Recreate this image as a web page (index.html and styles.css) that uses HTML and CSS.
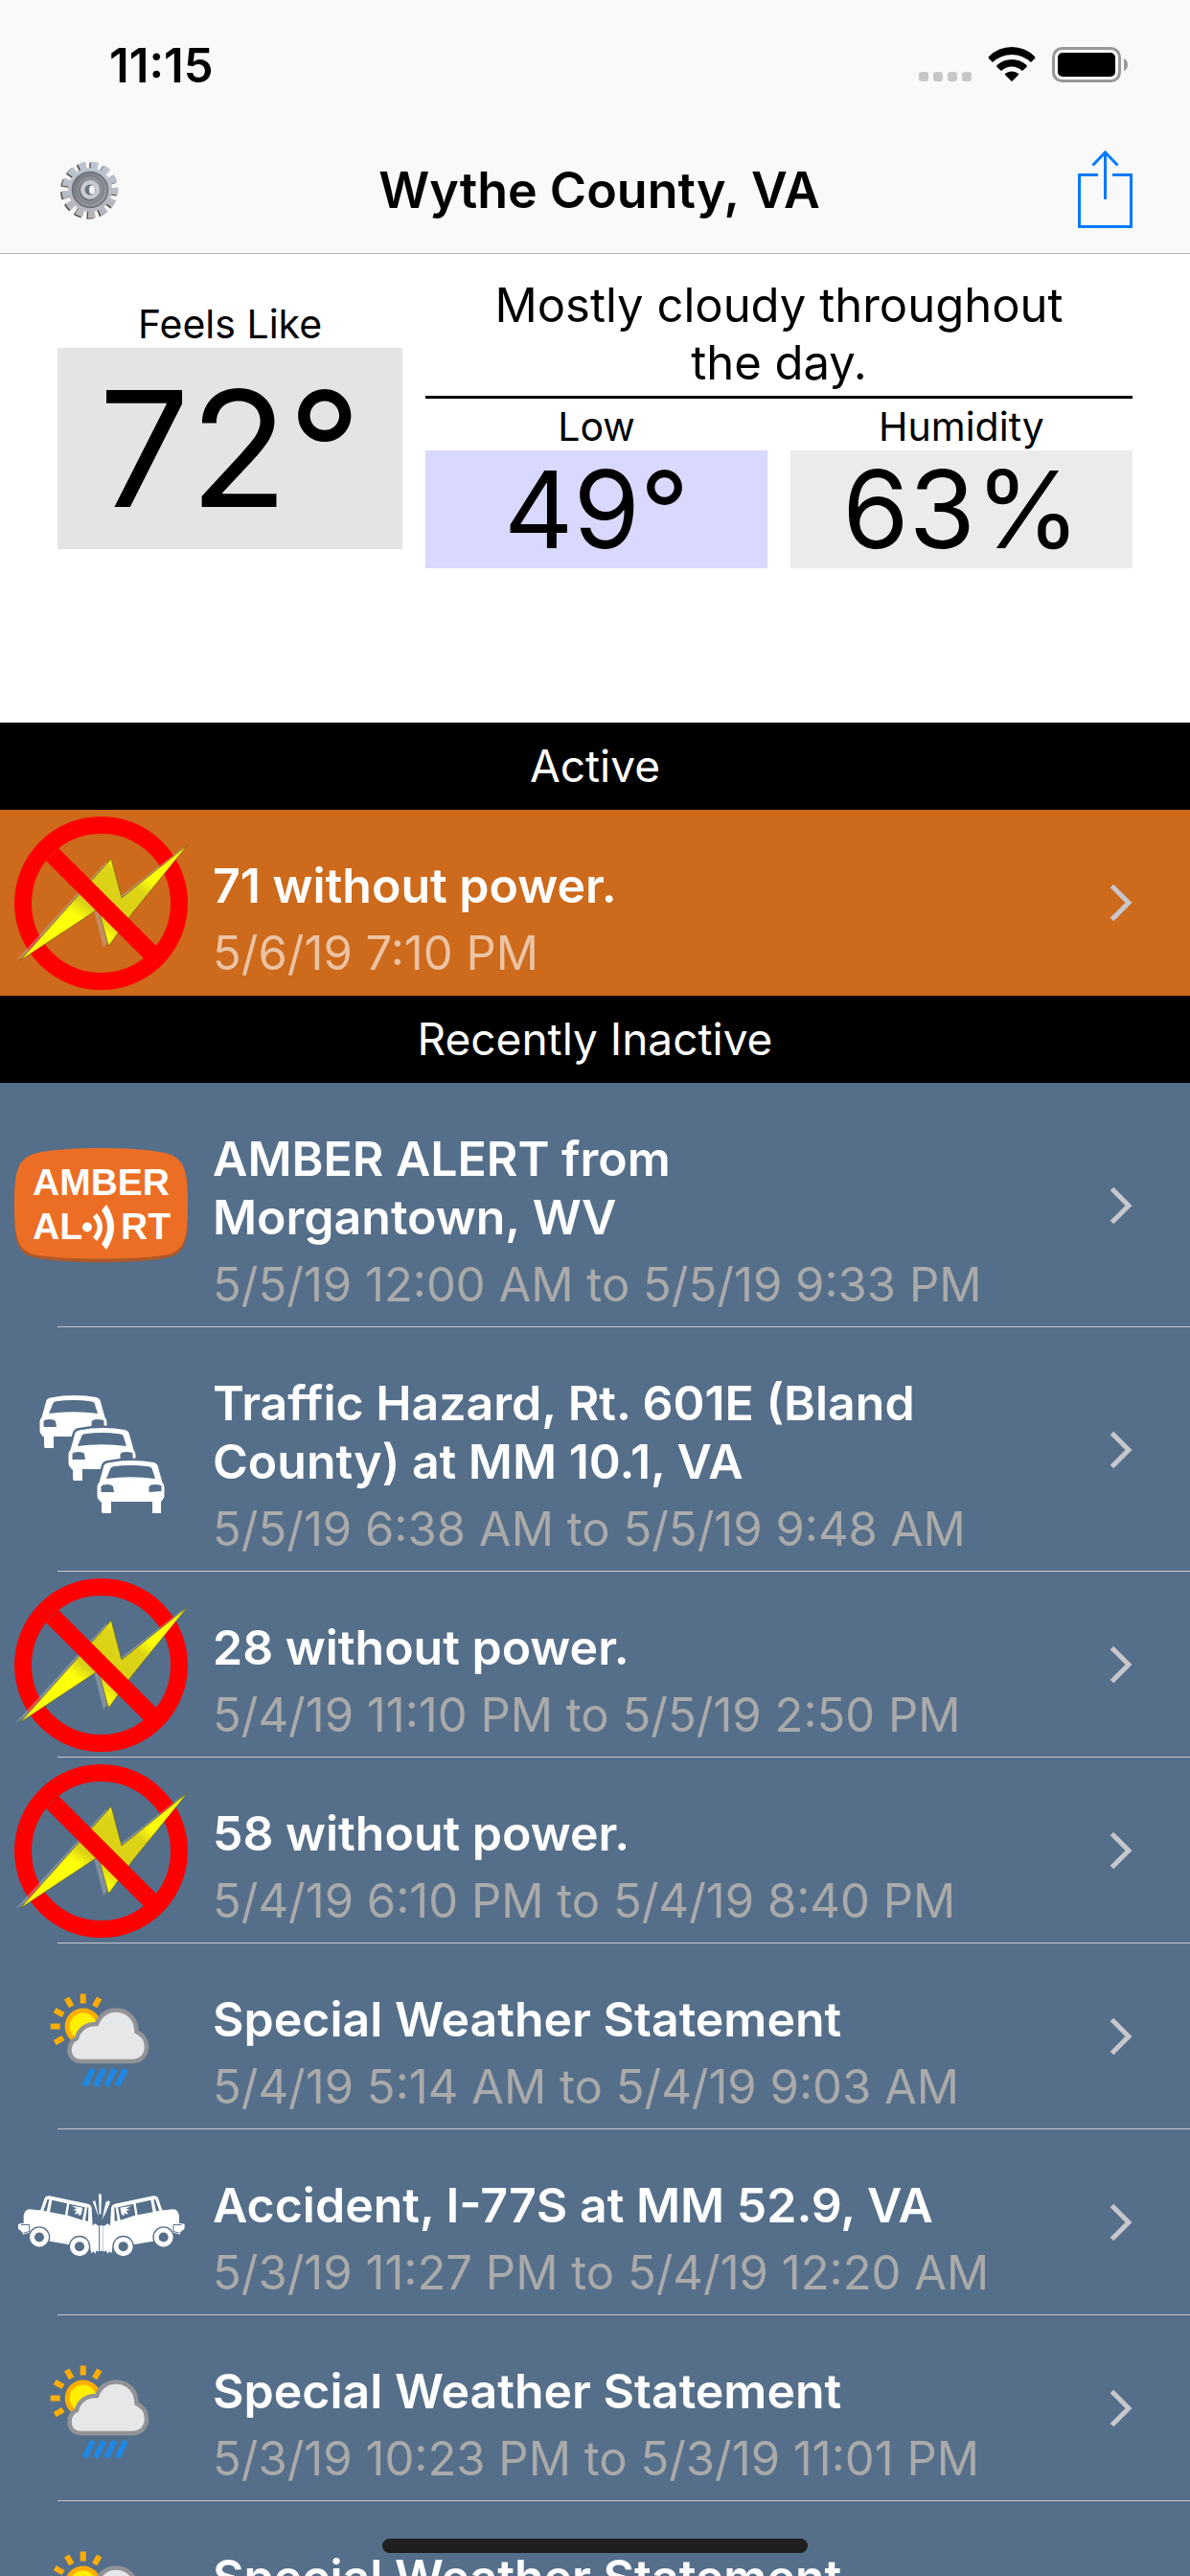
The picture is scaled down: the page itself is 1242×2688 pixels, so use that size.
FILE: index.html
```html
<!DOCTYPE html>
<html lang="en">
<head>
<meta charset="utf-8">
<meta name="viewport" content="width=device-width, initial-scale=1">
<title>Wythe County, VA</title>
<link rel="stylesheet" href="styles.css">
</head>
<body>
<svg class="sprite" aria-hidden="true">
  <defs>
    <linearGradient id="bolt-fill" x1="0" y1="1" x2="1" y2="0">
      <stop offset=".36" stop-color="#ffff0a"/>
      <stop offset=".44" stop-color="#d9d018"/>
      <stop offset=".66" stop-color="#ddd416"/>
      <stop offset=".74" stop-color="#ffff0a"/>
    </linearGradient>
    <linearGradient id="steel" x1="0" y1="0" x2="0" y2="1">
      <stop offset="0" stop-color="#b9c5d0"/>
      <stop offset="1" stop-color="#b9b6bd"/>
    </linearGradient>
    <linearGradient id="steel-dark" x1="0" y1="0" x2="1" y2="1">
      <stop offset="0" stop-color="#70757b"/>
      <stop offset="1" stop-color="#a2a5ab"/>
    </linearGradient>
  </defs>

  <symbol id="no-power" viewBox="0 0 181 181">
    <circle cx="90.5" cy="90.5" r="81.5" fill="none" stroke="#f00" stroke-width="18"/>
    <path d="M176 32 107 86 96 47 1 151 83 98 93 137 118 104Z" fill="#b9b9b9" fill-opacity=".45"/>
    <path d="M180.500 30 112 85 101 44 6.400 150 87.700 96.300 98.400 135 123 101Z" fill="url(#bolt-fill)" stroke="#5e5a10" stroke-width=".6"/>
    <path d="M39.500 39.500 142 142" stroke="#f00" stroke-width="18.500"/>
  </symbol>

  <symbol id="car" viewBox="-4 -4 78 63">
    <path class="car-body" d="M0 27Q0 25 2 23L7 5Q8 3 11 2.500Q35-2 59 2Q62 3 63 5L68 23Q70 25 70 28V37Q70 39 66.500 43V55H57.500V43H14.500V55H6Q4.500 55 4.500 52V44Q0 40 0 37Z"/>
    <path class="cutout" d="M14 8Q15 6.500 17 6.200Q35 4 53 6.200Q56 6.500 57 8L60.500 19Q35 15.500 9.500 19ZM4 27 6 25.500Q14 24 16.500 27L17.500 33H4ZM67 26.500 65 25.500Q56 24 54 27.500V33L67 32Z"/>
  </symbol>
  <symbol id="traffic" viewBox="0 0 181 181">
    <use href="#car" x="22.500" y="30" width="78" height="63"/>
    <use href="#car" x="52.500" y="64" width="78" height="63"/>
    <use href="#car" x="82.500" y="98" width="78" height="63"/>
  </symbol>

  <symbol id="storm" viewBox="0 0 181 181">
    <g stroke="#ffae00" stroke-width="6">
      <path id="ray" d="M71.700 45.500v10"/>
      <use href="#ray" transform="rotate(30 71.700 79.500)"/>
      <use href="#ray" transform="rotate(-30 71.700 79.500)"/>
      <use href="#ray" transform="rotate(-60 71.700 79.500)"/>
      <use href="#ray" transform="rotate(-90 71.700 79.500)"/>
      <use href="#ray" transform="rotate(-120 71.700 79.500)"/>
    </g>
    <circle cx="71.700" cy="79.500" r="16.500" fill="#fff000" stroke="#ffae00" stroke-width="5"/>
    <path d="M70 116C62 116 57.500 111 57.500 104C57.500 98 61 94 65 92C67 82 76 76.500 86 77C89 68 97 62.500 106 62.500C119 62.500 127.500 72 127.500 85C134 88 138 94 138 101C138 110 132 116 123 116Z" fill="#e6e7e9" stroke="#919396" stroke-width="4.500"/>
    <path d="M82 124 73.500 141.500M93.300 124 84.800 141.500M104.600 124 96.100 141.500M116 124 107.500 141.500" stroke="#1e88e5" stroke-width="6"/>
  </symbol>

  <symbol id="half-crash" viewBox="0 0 570 300">
    <path fill="#fff" d="M44 148V124Q48 104 62 104L90 107 97 107 109 72Q112 62 124 62L246 88Q256 91 257 102L260 155 268 149 281 158V238L272 234 268 244 262 236 256 242 250 214 188 215 122 204 62 178 42 184 40 176 27 165V151Z"/>
    <path class="cutout" d="M106 109 119 73 124 74 116 111ZM126 113 133 76 180 86 174 122ZM181 123 187 88 236 98 228 139ZM237 140 243 98 247 99 246 142Z"/>
    <path d="M194 94 222 98 229 100 224 122 214 124 218 116 203 121 210 109 198 107 210 102Z" fill="#fff"/>
    <path d="M36 153H62V174L44 179" fill="none" class="seam"/>
    <g class="wheel">
      <circle cx="93" cy="192" r="32"/>
      <circle cx="219" cy="221" r="32"/>
    </g>
    <g class="cutout">
      <circle cx="93" cy="192" r="15"/>
      <circle cx="219" cy="221" r="15"/>
    </g>
    <path d="M260 80 268 77 279 128ZM258 160Q266 150 274 160" fill="#fff"/>
  </symbol>
  <symbol id="crash" viewBox="0 0 181 181">
    <g transform="translate(-5 41.500) scale(.3333)">
      <use href="#half-crash" width="570" height="300"/>
      <use href="#half-crash" width="570" height="300" transform="translate(575 0) scale(-1 1)"/>
      <path d="M279 58Q284 54 288 60L286 120H281ZM302 80 314 84 289 138Z" fill="#fff"/>
      <path d="M281 155H293V235H281Z" fill="#fff"/>
      <path d="M281 155V242" class="seam"/>
    </g>
  </symbol>

  <symbol id="chevron" viewBox="0 0 24 40">
    <path d="M2.500 2.500 20 20 2.500 37.500" fill="none" stroke="#c7c7cc" stroke-width="5"/>
  </symbol>
</svg>

<div class="app">
  <header class="top">
    <div class="status">
      <time class="clock">11:15</time>
      <div class="status-icons">
        <svg width="55" height="38" viewBox="0 0 55 38" fill="#c7c7c7" aria-hidden="true">
          <rect y="26" width="10" height="10" rx="3"/><rect x="15" y="26" width="10" height="10" rx="3"/><rect x="30" y="26" width="10" height="10" rx="3"/><rect x="45" y="26" width="10" height="10" rx="3"/>
        </svg>
        <svg width="50" height="38" viewBox="0 0 50 38" aria-label="Wi-Fi">
          <path d="M1 12Q0 11 1 10Q11 0 25 0T49 10Q50 11 49 12L45 16Q36 8 25 8T5 16Z"/>
          <path d="M9.500 21Q9 20 9.500 19Q16 13 25 13T40.500 19Q41 20 40.500 21L36 25Q31 20.500 25 20.500T14 25Z"/>
          <path d="M18 29Q17.500 28 18.500 27.500Q25 23.500 31.500 27.500Q32.500 28 32 29L25 36Z"/>
        </svg>
        <svg width="80" height="38" viewBox="0 0 80 38" aria-label="Battery full">
          <rect x="1.500" y="1.500" width="69" height="34" rx="9" fill="none" stroke="#989898" stroke-width="3"/>
          <rect x="6" y="6" width="60" height="25" rx="5"/>
          <path d="M75 12Q79 14 79 18.500T75 25Z" fill="#989898"/>
        </svg>
      </div>
    </div>
    <div class="nav">
      <button class="nav-button" type="button" aria-label="Settings">
        <svg width="66" height="66" viewBox="0 0 66 66">
          <g fill="none" stroke-width="9">
            <circle cx="32.500" cy="34" r="25" pathLength="26" stroke-dasharray="1.2 .8" stroke="#5c554f" transform="rotate(-5 32.500 34)"/>
            <circle cx="34" cy="33" r="25" pathLength="26" stroke-dasharray="1.2 .8" stroke="url(#steel)" transform="rotate(-5 34 33)"/>
          </g>
          <circle cx="34" cy="33" r="23" fill="url(#steel)"/>
          <circle cx="34" cy="33" r="18.500" fill="url(#steel-dark)" stroke="#6a6e75" stroke-width="1.500"/>
          <circle cx="34" cy="33" r="14.500" fill="#8b9096" stroke="#777b82"/>
          <circle cx="33" cy="34" r="10.500" fill="#6d7076"/>
          <circle cx="34" cy="33" r="10" fill="#c9cbd2"/>
          <circle cx="34" cy="33" r="5.500" fill="#6c7680"/>
          <ellipse cx="36" cy="33" rx="3" ry="4.500" fill="#f4f6f8"/>
        </svg>
      </button>
      <h1 class="nav-title">Wythe County, VA</h1>
      <button class="nav-button" type="button" aria-label="Share">
        <svg width="57" height="82" viewBox="0 0 57 82" fill="none" stroke="#007aff" stroke-width="3">
          <path d="M21 25.500H1.500V79.500H55.500V25.500H36"/>
          <path d="M28.500 2V51M15.500 15.500 28.500 2 41.500 15.500"/>
        </svg>
      </button>
    </div>
  </header>

  <section class="weather">
    <div class="feels">
      <h2 class="label">Feels Like</h2>
      <p class="value value-large">72°</p>
    </div>
    <div class="forecast">
      <p class="summary">Mostly cloudy throughout the day.</p>
      <div class="stats">
        <div class="stat">
          <h2 class="label">Low</h2>
          <p class="value value-low">49°</p>
        </div>
        <div class="stat">
          <h2 class="label">Humidity</h2>
          <p class="value">63%</p>
        </div>
      </div>
    </div>
  </section>

  <main class="alerts">
    <h2 class="section-title">Active</h2>
    <ul class="list list-active">
      <li><a class="row" href="#a1">
        <svg class="icon"><use href="#no-power"/></svg>
        <span class="text"><strong class="title">71 without power.</strong><span class="when">5/6/19 7:10 PM</span></span>
        <svg class="chevron"><use href="#chevron"/></svg>
      </a></li>
    </ul>
    <h2 class="section-title">Recently Inactive</h2>
    <ul class="list">
      <li><a class="row" href="#r1">
        <svg class="icon" viewBox="0 0 181 181">
          <path d="M0 91C0 58 3 44 20 38C48 30 133 30 161 38C178 44 181 58 181 91V106C180 132 176 141 161 145C133 152 48 152 20 145C5 141 1 132 0 106Z" fill="#ad592b"/>
          <path d="M0 88C0 57 3 43 20 37C48 29 133 29 161 37C178 43 181 57 181 88C181 126 178 136 161 142C133 148 48 148 20 142C3 136 0 126 0 88Z" fill="#ec6e24"/>
          <g class="amber-text">
            <text x="19" y="80">AMBER</text>
            <text x="19" y="126">AL</text>
            <text x="111" y="126">RT</text>
          </g>
          <circle cx="76" cy="113.500" r="5" fill="#fff"/>
          <path d="M86 99 82 103Q91 113.500 82 124L86 128Q98 113.500 86 99Z" fill="#fff"/>
          <path d="M96 90 91 96Q103 113.500 91 131L96 137Q112 113.500 96 90Z" fill="#fff"/>
        </svg>
        <span class="text"><strong class="title">AMBER ALERT from Morgantown,&nbsp;WV</strong><span class="when">5/5/19 12:00 AM to 5/5/19 9:33 PM</span></span>
        <svg class="chevron"><use href="#chevron"/></svg>
      </a></li>
      <li><a class="row" href="#r2">
        <svg class="icon"><use href="#traffic"/></svg>
        <span class="text"><strong class="title">Traffic Hazard, Rt. 601E (Bland County) at MM 10.1, VA</strong><span class="when">5/5/19 6:38 AM to 5/5/19 9:48 AM</span></span>
        <svg class="chevron"><use href="#chevron"/></svg>
      </a></li>
      <li><a class="row" href="#r3">
        <svg class="icon"><use href="#no-power"/></svg>
        <span class="text"><strong class="title">28 without power.</strong><span class="when">5/4/19 11:10 PM to 5/5/19 2:50 PM</span></span>
        <svg class="chevron"><use href="#chevron"/></svg>
      </a></li>
      <li><a class="row" href="#r4">
        <svg class="icon"><use href="#no-power"/></svg>
        <span class="text"><strong class="title">58 without power.</strong><span class="when">5/4/19 6:10 PM to 5/4/19 8:40 PM</span></span>
        <svg class="chevron"><use href="#chevron"/></svg>
      </a></li>
      <li><a class="row" href="#r5">
        <svg class="icon"><use href="#storm"/></svg>
        <span class="text"><strong class="title">Special Weather Statement</strong><span class="when">5/4/19 5:14 AM to 5/4/19 9:03 AM</span></span>
        <svg class="chevron"><use href="#chevron"/></svg>
      </a></li>
      <li><a class="row" href="#r6">
        <svg class="icon"><use href="#crash"/></svg>
        <span class="text"><strong class="title">Accident, I-77S at MM 52.9, VA</strong><span class="when">5/3/19 11:27 PM to 5/4/19 12:20 AM</span></span>
        <svg class="chevron"><use href="#chevron"/></svg>
      </a></li>
      <li><a class="row" href="#r7">
        <svg class="icon"><use href="#storm"/></svg>
        <span class="text"><strong class="title">Special Weather Statement</strong><span class="when">5/3/19 10:23 PM to 5/3/19 11:01 PM</span></span>
        <svg class="chevron"><use href="#chevron"/></svg>
      </a></li>
      <li><a class="row" href="#r8">
        <svg class="icon"><use href="#storm"/></svg>
        <span class="text"><strong class="title">Special Weather Statement</strong></span>
        <svg class="chevron"><use href="#chevron"/></svg>
      </a></li>
    </ul>
  </main>
  <div class="home-indicator"></div>
</div>
</body>
</html>
```
FILE: styles.css
```css
:root {
  --slate: #556f8a;
  --orange: #cd6a1b;
}

* {
  box-sizing: border-box;
  margin: 0;
  padding: 0;
}

body {
  font-family: Inter, "Liberation Sans", sans-serif;
  font-size: 49px;
  line-height: 61px;
  color: #000;
  background: #fff;
}

.sprite {
  position: absolute;
  width: 0;
  height: 0;
}

.app {
  display: flex;
  flex-direction: column;
  height: 100vh;
}

/* Status bar and navigation */
.top {
  flex: none;
  background: #f9f9f9;
  border-bottom: 1px solid #b2b2b2;
}

.status {
  display: flex;
  align-items: center;
  justify-content: space-between;
  height: 132px;
  padding: 4px 64px 0 114px;
}

.clock {
  font-size: 49px;
  font-weight: 600;
}

.status-icons {
  display: flex;
  gap: 17px;
}

.nav {
  display: flex;
  align-items: center;
  justify-content: space-between;
  height: 132px;
  padding: 0 60px;
}

.nav-title {
  font-size: 52px;
  font-weight: 600;
}

.nav-button {
  border: 0;
  background: none;
}

.nav-button svg {
  display: block;
}

/* Current conditions */
.weather {
  flex: none;
  display: grid;
  grid-template-columns: 360px 1fr;
  gap: 24px;
  min-height: 489px;
  padding: 24px 60px;
  text-align: center;
}

.feels {
  padding-top: 24px;
}

.label {
  font-size: 41px;
  font-weight: 400;
  line-height: 50px;
}

.value {
  font-size: 112px;
  line-height: 123px;
  background: #ebebeb;
}

.value-large {
  font-size: 168px;
  line-height: 210px;
  background: #e4e4e4;
}

.value-low {
  background: #d9d8ff;
}

.summary {
  padding: 0 36px 4px;
  line-height: 60px;
  border-bottom: 3px solid #000;
}

.stats {
  display: grid;
  grid-template-columns: 1fr 1fr;
  gap: 24px;
  padding-top: 4px;
}

/* Alerts */
.alerts {
  flex: 1;
  min-height: 0;
  overflow-y: auto;
  scrollbar-width: none;
  background: var(--slate);
}

.section-title {
  padding: 15px;
  font-size: 46px;
  font-weight: 400;
  text-align: center;
  color: #fff;
  background: #000;
}

.list {
  list-style: none;
  color: #aaa;
}

.list-active {
  color: #ebc3a4;
  background: var(--orange);
}

.row {
  display: flex;
  align-items: center;
  min-height: 194px;
  padding: 0 60px 0 15px;
  color: inherit;
  text-decoration: none;
}

.list:not(.list-active) .row {
  background: linear-gradient(#c8c7cc, #c8c7cc) 60px 100% / 100% 1px no-repeat;
}

.icon {
  flex: none;
  width: 181px;
  height: 181px;
}

.text {
  flex: 1;
  display: flex;
  flex-direction: column;
  align-self: flex-start;
  gap: 9px;
  padding: 49px 48px 14px 26px;
}

.title {
  font-size: 50px;
  font-weight: 600;
  color: #fff;
}

.chevron {
  flex: none;
  width: 24px;
  height: 40px;
}

/* Icon parts */
.amber-text {
  font: 700 39px/1 "Liberation Sans", sans-serif;
  fill: #fff;
}

.car-body {
  fill: #fff;
  stroke: var(--slate);
  stroke-width: 5px;
  paint-order: stroke;
}

.cutout {
  fill: var(--slate);
}

.seam {
  stroke: var(--slate);
  stroke-width: 3px;
}

.wheel {
  fill: #fff;
  stroke: var(--slate);
  stroke-width: 4px;
}

.home-indicator {
  position: fixed;
  bottom: 24px;
  left: 50%;
  width: 444px;
  height: 15px;
  border-radius: 8px;
  background: #1f1f1f;
  transform: translateX(-50%);
}
```
